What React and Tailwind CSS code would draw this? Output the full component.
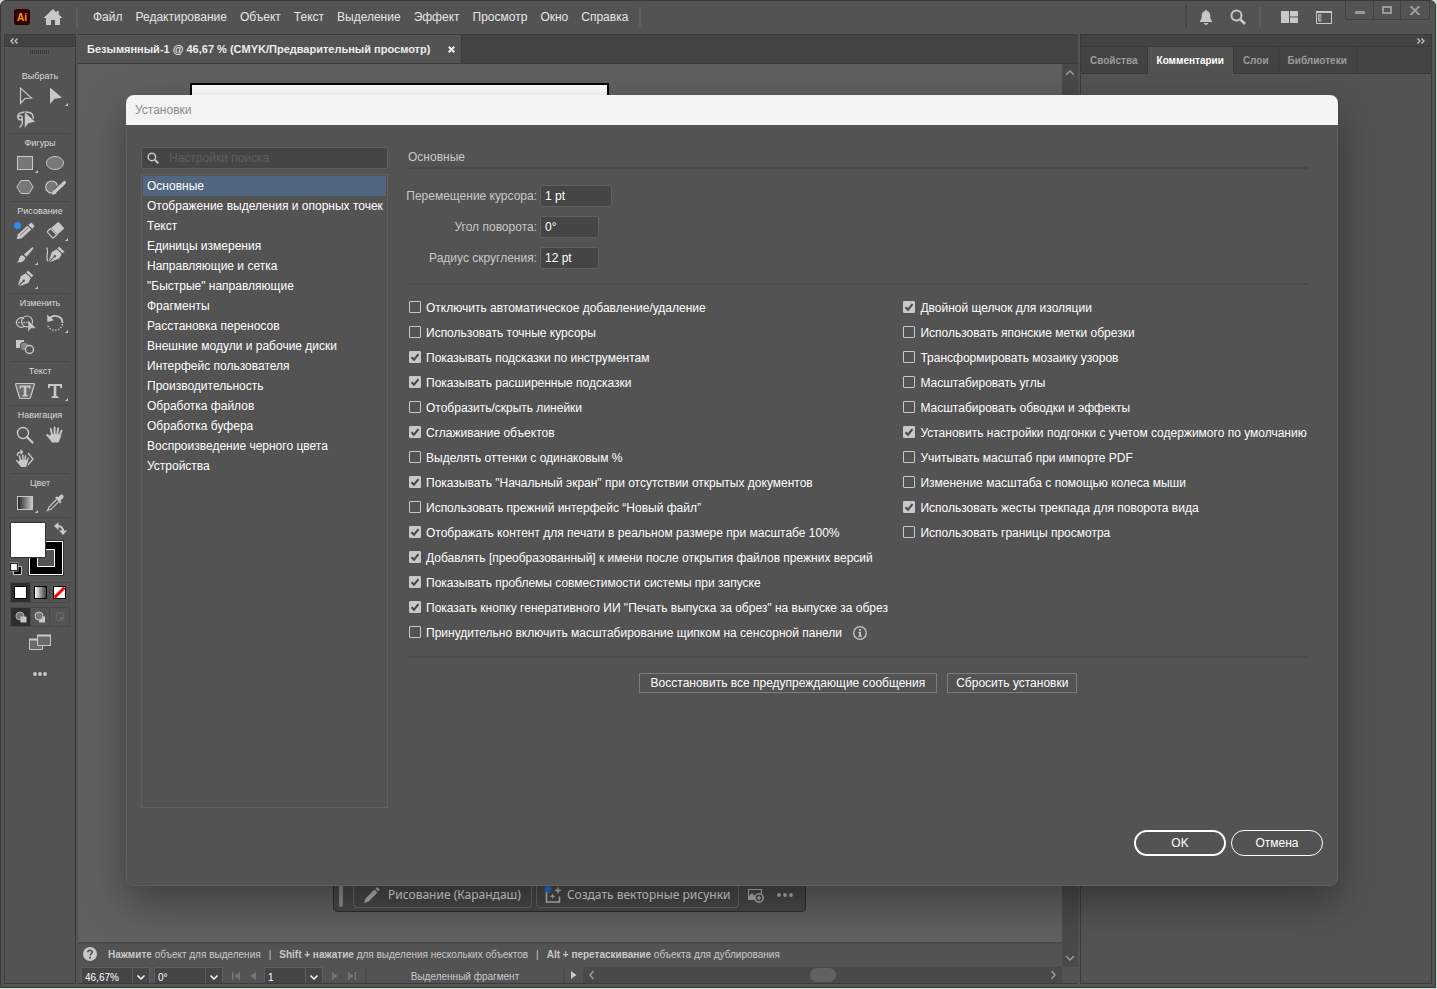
import React, { useState } from 'react';

const menus = ['Файл', 'Редактирование', 'Объект', 'Текст', 'Выделение', 'Эффект', 'Просмотр', 'Окно', 'Справка'];

const categories = [
  'Основные',
  'Отображение выделения и опорных точек',
  'Текст',
  'Единицы измерения',
  'Направляющие и сетка',
  '"Быстрые" направляющие',
  'Фрагменты',
  'Расстановка переносов',
  'Внешние модули и рабочие диски',
  'Интерфейс пользователя',
  'Производительность',
  'Обработка файлов',
  'Обработка буфера',
  'Воспроизведение черного цвета',
  'Устройства',
];

const leftOptions = [
  ['Отключить автоматическое добавление/удаление', false],
  ['Использовать точные курсоры', false],
  ['Показывать подсказки по инструментам', true],
  ['Показывать расширенные подсказки', true],
  ['Отобразить/скрыть линейки', false],
  ['Сглаживание объектов', true],
  ['Выделять оттенки с одинаковым %', false],
  ['Показывать "Начальный экран" при отсутствии открытых документов', true],
  ['Использовать прежний интерфейс “Новый файл”', false],
  ['Отображать контент для печати в реальном размере при масштабе 100%', true],
  ['Добавлять [преобразованный] к имени после открытия файлов прежних версий', true],
  ['Показывать проблемы совместимости системы при запуске', true],
  ['Показать кнопку генеративного ИИ "Печать выпуска за обрез" на выпуске за обрез', true],
  ['Принудительно включить масштабирование щипком на сенсорной панели', false, true],
];

const rightOptions = [
  ['Двойной щелчок для изоляции', true],
  ['Использовать японские метки обрезки', false],
  ['Трансформировать мозаику узоров', false],
  ['Масштабировать углы', false],
  ['Масштабировать обводки и эффекты', false],
  ['Установить настройки подгонки с учетом содержимого по умолчанию', true],
  ['Учитывать масштаб при импорте PDF', false],
  ['Изменение масштаба с помощью колеса мыши', false],
  ['Использовать жесты трекпада для поворота вида', true],
  ['Использовать границы просмотра', false],
];

// Tool glyphs, each drawn in a 30x24 cell
const glyphs = {
  select: <path d="M10.500 4v15.500l4.500-5 6.500-.500z" fill="none" stroke="#c8c8c8" strokeWidth="1.200" />,
  direct: <path d="M10 3.500V20l4.700-5.300 7.300-1z" />,
  lasso: (
    <>
      <path d="M13 11.500H9.500C5 8.500 9 4 15.500 4S24 7 23 11M12 9.500a2 2 0 1 0-3 2c2 1 4-.5 3-3M12 12c1 3-.5 6-2.500 7.500" fill="none" stroke="#c8c8c8" strokeWidth="1.400" />
      <path d="M14.500 3.500v17l4-5 7-1.500z" stroke="#535353" strokeWidth=".6" />
    </>
  ),
  rect: <rect x="7.500" y="5.500" width="15" height="13" fill="#777" stroke="#c8c8c8" />,
  ellipse: <ellipse cx="15" cy="12" rx="8.500" ry="6.500" fill="#777" stroke="#c8c8c8" />,
  hexagon: <path d="M6.800 12L11 5.500h8l4.200 6.500-4.200 6.500h-8z" fill="#777" stroke="#c8c8c8" />,
  shaper: (
    <>
      <circle cx="11.700" cy="12" r="6" fill="#777" stroke="#c8c8c8" strokeWidth="1.200" />
      <path d="M25 7.500L15 16.500" stroke="#535353" strokeWidth="5.500" />
      <path d="M24.500 7.500L15 16.500" stroke="#c8c8c8" strokeWidth="3.200" strokeLinecap="round" />
      <path d="M12 20l1.200-5 3.600 3.400z" />
    </>
  ),
  pencil: (
    <>
      <path d="M17.300 6.800l4 3.800-9.500 8.700-5.100 1 1.300-5.100z" />
      <path d="M18.300 5.900l1.900-1.700q.9-.7 1.800.1l2 1.900q.8.9 0 1.700l-1.700 1.800z" />
      <path d="M10 16.500L18 9" stroke="#535353" strokeWidth=".7" />
      <circle cx="7.500" cy="6.500" r="3.600" fill="#2d8ceb" />
    </>
  ),
  eraser: (
    <>
      <path d="M17.500 3.500q.8-.7 1.600 0l4.500 5q.7.8 0 1.500l-6 5.500-6.500-6.500z" />
      <path d="M10.500 9.500L7.800 12q-.8.900 0 1.700l4.500 4.800q.7.700 1.500 0l3-2.700z" fill="none" stroke="#c8c8c8" strokeWidth="1.200" />
    </>
  ),
  brush: (
    <>
      <path d="M22.500 4q1.500.5.500 2l-6.500 7.800-2.600-2.300z" />
      <path d="M12.900 12.400l2.600 2.400c-1.500 4.500-5.500 5-9 4.500 2.800-1 2.200-3 3.200-5.200q1-2 3.200-1.700z" />
    </>
  ),
  curvature: (
    <>
      <path d="M6.500 4.500c3 3-1.500 10 1.500 14" fill="none" stroke="#c8c8c8" strokeWidth="1.200" />
      <path d="M19 3.500l5.500 5.200-2 1.500-5-4.800z" />
      <path d="M16.800 6.200l5 4.800-2.500 4.500-9.800 3.800 5-5a1.200 1.200 0 1 0-.8-.8L8.800 18.500l3-9.500z" />
    </>
  ),
  pen: (
    <>
      <path d="M18 3.500l5.500 5.200-2 1.600-5-4.800z" />
      <path d="M15.800 6.300l5 4.800-2.500 4.900-9.600 3.600 4.700-4.700a1.200 1.200 0 1 0-.8-.8L7.800 18.800l3-9.600z" />
    </>
  ),
  builder: (
    <>
      <circle cx="17" cy="10.500" r="5.500" fill="none" stroke="#c8c8c8" strokeWidth="1.200" />
      <path d="M14 7.500a4.800 4.800 0 1 0 0 8h4" fill="none" stroke="#c8c8c8" strokeWidth="1.200" />
      <path d="M8 11.500h10" stroke="#c8c8c8" strokeWidth="1.500" strokeDasharray="1.500 1.200" />
      <path d="M18 9v12l3-3.500 5-.5z" stroke="#535353" strokeWidth=".5" />
    </>
  ),
  rotate: (
    <>
      <path d="M8.500 9C12 2.500 22.500 4 22.500 12" fill="none" stroke="#c8c8c8" strokeWidth="1.800" />
      <path d="M7 3.500l.5 7.500 6.500-1.800z" />
      <path d="M22.500 13C21 21 10 21.500 7.500 14" fill="none" stroke="#c8c8c8" strokeWidth="1.400" strokeDasharray="1.300 1.700" />
    </>
  ),
  blend: (
    <>
      <rect x="6" y="5" width="8" height="8" />
      <rect x="10.500" y="7.500" width="8" height="8" rx="2.500" fill="#888" stroke="#535353" />
      <circle cx="19.500" cy="14.500" r="4" fill="#535353" stroke="#c8c8c8" strokeWidth="1.400" />
    </>
  ),
  touchType: (
    <>
      <path d="M6.500 4.500h17q1.200 0 .8 1.300l-3.800 12.700q-.3 1-1.300 1h-8.400q-1 0-1.300-1L5.700 5.800q-.4-1.300.8-1.300z" fill="#6a6a6a" stroke="#c8c8c8" strokeWidth="1.200" />
      <path d="M9.500 6.500h11v3.200h-1.200l-.6-1.500h-2.400v7.600l1.500.6v1.100h-5.600v-1.100l1.500-.6V8.200h-2.400l-.6 1.500H9.500z" />
    </>
  ),
  type: <path d="M8 5h14v4.200h-1.300l-.9-2.200h-3.500v10l2.200.6V19h-7v-1.400l2.200-.6V7h-3.500l-.9 2.200H8z" />,
  zoom: (
    <>
      <circle cx="13" cy="10" r="5.500" fill="none" stroke="#c8c8c8" strokeWidth="1.400" />
      <path d="M17 14l5.500 5.500" stroke="#c8c8c8" strokeWidth="2.200" strokeLinecap="round" />
    </>
  ),
  hand: (
    <>
      <path d="M11 11.500q4-1.500 8.500 0l1.500 2-2.500 6h-6.500L8 14z" />
      <path d="M12 12L10.800 6M14.600 11.500V4.500M17.300 11.500l.8-6M19.500 13l2-5.300M12 17l-4.700-5" stroke="#c8c8c8" strokeWidth="1.900" strokeLinecap="round" />
    </>
  ),
  rotateView: (
    <>
      <path d="M10 13q3.500-1 6.500 0l1.500 1.500-2 5.500h-5l-3.500-4.500z" />
      <path d="M10.500 13.500l-1-4.500M12.800 13V8M14.900 13.500l.6-4.500M16.700 14.500l1.500-3.500M10.500 17.500l-3.800-3.700" stroke="#c8c8c8" strokeWidth="1.500" strokeLinecap="round" />
      <path d="M7.500 9C7 6 9 5 12 5M10.500 2.800l2 2.200-2 2M18 6l5 6-5 6" fill="none" stroke="#c8c8c8" strokeWidth="1.300" />
    </>
  ),
  gradient: (
    <>
      <defs>
        <linearGradient id="toolGradient">
          <stop offset="0" stopColor="#222" />
          <stop offset="1" stopColor="#ccc" />
        </linearGradient>
      </defs>
      <rect x="7.500" y="5.500" width="15" height="13" fill="url(#toolGradient)" stroke="#c8c8c8" />
    </>
  ),
  dropper: (
    <>
      <path d="M16.500 8.500L9 16q-1 2.800-1.500 3.500.9-.3 3.500-1.200l7.500-7.500" fill="none" stroke="#c8c8c8" strokeWidth="1.200" />
      <path d="M15 6.500l1.500-1 1.700.8 2-2.300q1.800-1 3 .3 1 1.400-.2 3l-2.300 2 .6 1.700-1.200 1.400z" />
    </>
  ),
};

const toolSections = [
  { title: 'Выбрать', tools: [['select', 'Выделение'], ['direct', 'Прямое выделение', true], ['lasso', 'Лассо']] },
  { title: 'Фигуры', tools: [['rect', 'Прямоугольник', true], ['ellipse', 'Эллипс'], ['hexagon', 'Многоугольник'], ['shaper', 'Shaper']] },
  { title: 'Рисование', tools: [['pencil', 'Карандаш'], ['eraser', 'Ластик', true], ['brush', 'Кисть', true], ['curvature', 'Кривизна'], ['pen', 'Перо', true]] },
  { title: 'Изменить', tools: [['builder', 'Создание фигур'], ['rotate', 'Поворот', true], ['blend', 'Переход']] },
  { title: 'Текст', tools: [['touchType', 'Изменение текста'], ['type', 'Текст', true]] },
  { title: 'Навигация', tools: [['zoom', 'Масштаб'], ['hand', 'Рука'], ['rotateView', 'Поворот вида']] },
  { title: 'Цвет', tools: [['gradient', 'Градиент', true], ['dropper', 'Пипетка']] },
];

function SearchIcon({ className }) {
  return (
    <svg className={className} viewBox="0 0 16 16" fill="none" stroke="currentColor">
      <circle cx="6.500" cy="6.500" r="5" strokeWidth="2" />
      <path d="M10.500 10.500l4.500 4.500" strokeWidth="2.600" />
    </svg>
  );
}

function Chevron({ className, d }) {
  return (
    <svg className={className} viewBox="0 0 10 10" fill="none" stroke="currentColor" strokeWidth="1.5">
      <path d={d} />
    </svg>
  );
}

function TopBar() {
  return (
    <header className="flex h-8 shrink-0 items-center">
      <svg className="ml-[13px] h-4 w-4 shrink-0" viewBox="0 0 16 16">
        <rect width="16" height="16" rx="3" fill="#330000" />
        <text x="8" y="11.500" textAnchor="middle" fontSize="10" fontWeight="700" fill="#ff9a00">Ai</text>
      </svg>
      <button type="button" aria-label="Начальный экран" className="ml-[13px] text-[#c8c8c8]">
        <svg className="h-4 w-5" viewBox="0 0 20 16" fill="currentColor">
          <path d="M10 0l3.500 3.400V2h2.300v3.600L19.500 9H17v7h-5v-5H8v5H3V9H.500z" />
        </svg>
      </button>
      <span className="ml-[13px] h-5 w-0.5 bg-[#5e5e5e]" />
      <nav className="ml-[15px] flex gap-[13px] text-xs text-[#e6e6e6]">
        {menus.map((m) => (
          <button key={m} type="button">{m}</button>
        ))}
      </nav>
      <span className="ml-[11px] h-5 w-0.5 bg-[#5e5e5e]" />
      <div className="ml-auto flex items-center text-[#c8c8c8]">
        <span className="h-6 w-0.5 bg-[#474747]" />
        <button type="button" aria-label="Уведомления" className="ml-3">
          <svg className="h-[15px] w-[14px]" viewBox="0 0 14 15" fill="currentColor">
            <path d="M7 0q1.200 0 1.300 1.200C11 2 11.300 4.200 11.300 6.500c0 2.500.7 3.500 1.700 4.500v1H1v-1c1-1 1.700-2 1.700-4.500C2.700 4.200 3 2 5.700 1.200Q5.800 0 7 0zM4.800 13h4.400Q8.500 15 7 15t-2.200-2z" />
          </svg>
        </button>
        <button type="button" aria-label="Поиск" className="ml-[17px]"><SearchIcon className="h-4 w-4" /></button>
        <span className="ml-[13px] h-5 w-0.5 bg-[#5e5e5e]" />
        <button type="button" aria-label="Упорядочить документы" className="ml-5">
          <svg className="h-3 w-[17px]" viewBox="0 0 17 12" fill="currentColor">
            <path d="M0 0h8v12H0zM9 0h8v5.500H9zM9 6.500h8V12H9z" />
          </svg>
        </button>
        <button type="button" aria-label="Рабочая среда" className="ml-[18px]">
          <svg className="h-[13px] w-4" viewBox="0 0 16 13" fill="none" stroke="currentColor">
            <path d="M.5 1h15v11.500H.500z" />
            <path d="M0 1h16" strokeWidth="2" />
            <path d="M2.500 3.500h2.500v6.500h-2.500z" strokeWidth=".8" />
            <path d="M3.500 4.500v5" strokeWidth="1.200" strokeDasharray="1 1" />
          </svg>
        </button>
      </div>
      <div className="mr-[5px] ml-[13px] flex self-start rounded-b border border-t-0 border-[#404040] text-[#9a9a9a]">
        <button type="button" aria-label="Свернуть" className="flex h-[18px] w-7 items-center justify-center border-r border-[#404040]">
          <span className="mt-1 h-[3px] w-2.5 bg-[#9a9a9a]" />
        </button>
        <button type="button" aria-label="Развернуть" className="flex h-[18px] w-[27px] items-center justify-center border-r border-[#404040]">
          <span className="h-2 w-2.5 border-2 border-[#9a9a9a]" />
        </button>
        <button type="button" aria-label="Закрыть" className="flex h-[18px] w-7 items-center justify-center">
          <svg className="h-[9px] w-2.5" viewBox="0 0 10 9" stroke="currentColor" strokeWidth="2"><path d="M.5 0l9 9M9.500 0l-9 9" /></svg>
        </button>
      </div>
    </header>
  );
}

function ToolBox() {
  return (
    <aside className="flex w-[72px] shrink-0 flex-col items-center border border-[#3b3b3b]">
      <div className="flex h-3 w-full items-center border-b border-[#3b3b3b] bg-[#434343] pl-[5px] text-[#c8c8c8]">
        <svg className="h-[6px] w-2" viewBox="0 0 8 6" fill="none" stroke="currentColor" strokeWidth="1.300"><path d="M3.500.5L1 3l2.500 2.500M7.500.5L5 3l2.500 2.500" /></svg>
      </div>
      <div className="mt-[3px] h-1 w-5 bg-[repeating-linear-gradient(90deg,#393939_0_1px,transparent_1px_2px)]" />
      <div className="mt-[13px] w-[60px]">
        {toolSections.map((s, i) => (
          <section key={s.title} className={i ? 'border-t border-[#484848] pt-px pb-0.5' : 'pt-px pb-px'}>
            <h2 className="h-4 text-center text-[9px] leading-4 whitespace-nowrap text-[#dadada]">{s.title}</h2>
            <div className="grid grid-cols-2">
              {s.tools.map(([id, name, more]) => (
                <button key={id} type="button" aria-label={name} className="h-6">
                  <svg className="h-6 w-[30px]" viewBox="0 0 30 24" fill="#c8c8c8">
                    {glyphs[id]}
                    {more && <path d="M28 19v3h-3z" />}
                  </svg>
                </button>
              ))}
            </div>
          </section>
        ))}
        <div className="border-t border-[#484848]">
          <svg className="h-[60px] w-[60px]" viewBox="0 0 60 60">
            <path d="M19.500 23.500h33v33h-33z" fill="#000" stroke="#fff" />
            <path d="M18.500 22.500h35v35h-35z" fill="none" stroke="#333" />
            <path d="M27.500 31.500h17v17h-17z" fill="#535353" stroke="#fff" />
            <path d="M.500 4.500h35v35H.500z" fill="#fff" stroke="#333" />
            <path d="M47 8.500q6-1 6 5" fill="none" stroke="#c8c8c8" strokeWidth="2" />
            <path d="M48.500 4v8L44 8zM49 12.500h8L53 17z" fill="#c8c8c8" />
            <path d="M3.500 48.500h8v8h-8z" fill="#000" stroke="#c8c8c8" />
            <path d="M-.5 44.500h9v9h-9z" fill="#c8c8c8" />
            <path d="M.500 45.500h7v7h-7z" fill="#fff" stroke="#222" strokeWidth="1.200" />
          </svg>
        </div>
        <div className="mt-1 flex border border-[#484848]">
          <button type="button" aria-label="Цвет" className="flex h-[19px] w-[19px] items-center justify-center bg-[#2e2e2e]"><span className="h-[13px] w-[13px] border border-black bg-white" /></button>
          <button type="button" aria-label="Градиент" className="flex h-[19px] flex-1 items-center justify-center border-x border-[#484848]"><span className="h-[13px] w-[13px] border border-black bg-linear-to-r from-white to-neutral-700" /></button>
          <button type="button" aria-label="Нет" className="flex h-[19px] w-[19px] items-center justify-center">
            <svg className="h-[13px] w-[13px]" viewBox="0 0 13 13"><path d="M.5.5h12v12H.500z" fill="#fff" stroke="#000" /><path d="M1.500 11.500l10-10" stroke="#f00" strokeWidth="3" /></svg>
          </button>
        </div>
        <div className="mt-1 flex border border-[#484848]">
          <button type="button" aria-label="Рисовать нормально" className="flex h-[18px] w-[19px] items-center justify-center bg-[#2e2e2e]">
            <svg className="h-3 w-3" viewBox="0 0 12 12"><circle cx="5" cy="5" r="4" fill="#777" stroke="#aaa" /><rect x="5.500" y="5.500" width="6" height="6" fill="#c8c8c8" /></svg>
          </button>
          <button type="button" aria-label="Рисовать позади" className="flex h-[18px] flex-1 items-center justify-center border-x border-[#484848]">
            <svg className="h-3 w-3" viewBox="0 0 12 12"><rect x="5" y="5.500" width="6" height="6" fill="#c8c8c8" /><circle cx="5" cy="5" r="4" fill="#777" stroke="#c8c8c8" /></svg>
          </button>
          <button type="button" aria-label="Рисовать внутри" className="flex h-[18px] w-[19px] items-center justify-center">
            <svg className="h-3 w-3" viewBox="0 0 12 12"><circle cx="6" cy="5.500" r="4" fill="none" stroke="#707070" /><path d="M6 6h3.500L6 9.500z" fill="#707070" /></svg>
          </button>
        </div>
        <button type="button" aria-label="Режим экрана" className="mx-auto mt-[7px] block">
          <svg className="h-[17px] w-[23px]" viewBox="0 0 23 17" fill="#6a6a6a" stroke="#c8c8c8">
            <path d="M.5 5.500h13v10H.500z" /><path d="M0 5.500h14" strokeWidth="2" />
            <path d="M8.500 1.500h13v10h-13z" /><path d="M8 1.500h14" strokeWidth="2" />
          </svg>
        </button>
        <button type="button" aria-label="Изменить панель инструментов" className="mx-auto mt-[21px] block">
          <svg className="h-1 w-[14px]" viewBox="0 0 14 4" fill="#c8c8c8"><circle cx="2" cy="2" r="1.900" /><circle cx="7" cy="2" r="1.900" /><circle cx="12" cy="2" r="1.900" /></svg>
        </button>
      </div>
    </aside>
  );
}

function ComboField({ label, value, narrow }) {
  return (
    <div className="flex h-5 border border-[#5e5e5e] bg-[#454545] text-white">
      <input aria-label={label} defaultValue={value} className={narrow ? 'w-10 pl-[3px] text-[10px]' : 'w-[50px] pl-[3px] text-[10px]'} />
      <button type="button" aria-label={label + ': список'} className="flex w-[17px] items-center justify-center border-l border-[#5e5e5e]">
        <Chevron className="h-2.5 w-2.5" d="M1.500 3.500L5 7l3.500-3.500" />
      </button>
    </div>
  );
}

function Workspace() {
  return (
    <main className="flex min-w-0 flex-1 flex-col border-t border-[#3b3b3b]">
      <div className="flex h-[29px] shrink-0 border-b border-[#3b3b3b] bg-[#434343]">
        <div className="flex items-center border-r border-[#3b3b3b] bg-[#535353] pr-[6px] pl-[9px] text-[11px] font-bold text-[#ececec]">
          Безымянный-1 @ 46,67 % (CMYK/Предварительный просмотр)
          <button type="button" aria-label="Закрыть документ" className="ml-[18px]">
            <svg className="h-[7px] w-[7px]" viewBox="0 0 7 7" stroke="currentColor" strokeWidth="2"><path d="M.7.7l5.600 5.600M6.300.7L.7 6.300" /></svg>
          </button>
        </div>
      </div>
      <div className="flex min-h-0 flex-1">
        <div className="flex min-w-0 flex-1 flex-col">
          <div className="relative min-h-0 flex-1 overflow-hidden bg-[#606060]">
            <div className="mt-[19px] ml-28 h-3/5 w-[419px] border-2 border-black bg-white" />
            <div className="absolute bottom-[30px] left-[255px] flex h-[34px] items-center rounded border border-[#2c2c2c] bg-[#484848] pr-3 pl-[5px] font-['Noto_Sans',sans-serif] text-xs text-[#dcdcdc]">
              <span className="h-6 w-1 rounded-full bg-[#8c8c8c]" />
              <button type="button" className="ml-2.5 flex h-[26px] items-center gap-2 rounded-sm border border-[#686868] px-2.5">
                <svg className="h-4 w-4" viewBox="0 0 16 16" fill="#b0b0b0"><path d="M10.500 2.500l3 3-9 9L0 16l1.500-4.500zM11.500 1.500l1-1Q13 0 14 .800l1.300 1.300q.7.900 0 1.400l-1 1z" /></svg>
                Рисование (Карандаш)
              </button>
              <button type="button" className="ml-1 flex h-[26px] items-center gap-[5px] rounded-sm border border-[#686868] px-2">
                <svg className="h-5 w-[17px] overflow-visible" viewBox="0 0 17 20" fill="none" stroke="#b8b8b8" strokeWidth="1.600">
                  <path d="M5 6.500H1.500v10.500h13V11.500" />
                  <path d="M13 1.500l1 3 3 1-3 1-1 3-1-3-3-1 3-1zM7.500 8.500l.8 2 2 .8-2 .8-.8 2-.8-2-2-.8 2-.8z" fill="#b8b8b8" stroke="none" />
                  <circle cx="3" cy="4" r="3.500" fill="#2370c4" stroke="none" />
                </svg>
                Создать векторные рисунки
              </button>
              <button type="button" aria-label="Добавить изображение" className="ml-[9px]">
                <svg className="h-[15px] w-4" viewBox="0 0 16 15" fill="none" stroke="#b0b0b0">
                  <path d="M7.500 11.500h-7V1.500h13V6" strokeWidth="1.200" />
                  <path d="M1 11V8l3-3 3 3 2-1.500L8 11z" fill="#b0b0b0" stroke="none" />
                  <circle cx="11" cy="10" r="4.200" fill="#484848" strokeWidth="1.600" />
                  <path d="M11 7.800v4.400M8.800 10h4.400" strokeWidth="1.400" />
                </svg>
              </button>
              <button type="button" aria-label="Дополнительно" className="ml-[13px]">
                <svg className="h-1 w-4" viewBox="0 0 16 4" fill="#b0b0b0"><circle cx="2" cy="2" r="1.900" /><circle cx="8" cy="2" r="1.900" /><circle cx="14" cy="2" r="1.900" /></svg>
              </button>
            </div>
          </div>
          <div className="h-[25px] shrink-0 border-t-2 border-[#494949] pl-[5px] text-[10px] whitespace-nowrap text-[#c8c8c8]">
            <div className="flex h-5 items-center">
              <svg className="h-[14px] w-[14px]" viewBox="0 0 14 14">
                <circle cx="7" cy="7" r="7" fill="#c8c8c8" />
                <path d="M4.800 5.300c0-3 4.600-2.700 4.400-.1C9.100 6.700 7.100 6.800 7.100 8.600" fill="none" stroke="#484848" strokeWidth="1.500" />
                <circle cx="7.100" cy="10.800" r="1" fill="#484848" />
              </svg>
              <p className="ml-[11px] flex gap-2">
                <span><b>Нажмите</b> объект для выделения</span>
                <span>|</span>
                <span><b>Shift + нажатие</b> для выделения нескольких объектов</span>
                <span>|</span>
                <span><b>Alt + перетаскивание</b> объекта для дублирования</span>
              </p>
            </div>
          </div>
        </div>
        <div className="flex w-4 shrink-0 flex-col items-center justify-between bg-[#494949] py-1 text-[#9a9a9a]">
          <button type="button" aria-label="Прокрутить вверх"><Chevron className="block h-2.5 w-2.5" d="M1 7l4-4 4 4" /></button>
          <button type="button" aria-label="Прокрутить вниз"><Chevron className="block h-2.5 w-2.5" d="M1 3l4 4 4-4" /></button>
        </div>
      </div>
      <div className="flex h-[17px] shrink-0 items-start overflow-hidden border-b border-[#3b3b3b] pl-[3px] text-[10px] text-[#c8c8c8]">
        <div className="flex gap-1">
          <ComboField label="Масштаб" value="46,67%" />
          <ComboField label="Поворот" value="0°" />
        </div>
        <div className="mr-2 ml-[9px] flex h-[18px] items-center gap-2.5 text-[#777]">
          <svg className="h-2 w-2" viewBox="0 0 8 8" fill="currentColor"><path d="M0 0h1.500v8H0zM8 0v8L2.500 4z" /></svg>
          <svg className="h-2 w-[6px]" viewBox="0 0 6 8" fill="currentColor"><path d="M6 0v8L.500 4z" /></svg>
        </div>
        <ComboField label="Монтажная область" value="1" narrow />
        <div className="mx-[9px] flex h-[18px] items-center gap-2.5 text-[#777]">
          <svg className="h-2 w-[6px]" viewBox="0 0 6 8" fill="currentColor"><path d="M0 0v8l5.500-4z" /></svg>
          <svg className="h-2 w-2" viewBox="0 0 8 8" fill="currentColor"><path d="M8 0H6.500v8H8zM0 0v8l5.500-4z" /></svg>
        </div>
        <span className="h-4 w-0.5 bg-[#4a4a4a]" />
        <span className="w-[196px] text-center leading-5">Выделенный фрагмент</span>
        <button type="button" aria-label="Показать" className="flex h-4 w-5 items-center justify-center border-l-2 border-[#4a4a4a]">
          <svg className="h-2 w-[6px]" viewBox="0 0 6 8" fill="currentColor"><path d="M0 0v8l5.500-4z" /></svg>
        </button>
        <div className="flex h-4 min-w-0 flex-1 items-center justify-between bg-[#494949] px-1 text-[#9a9a9a]">
          <Chevron className="h-2.5 w-2.5" d="M6.500 1L3 5l3.500 4" />
          <span className="h-[14px] w-[26px] rounded-full bg-[#616161]" />
          <Chevron className="h-2.5 w-2.5" d="M3.500 1L7 5 3.500 9" />
        </div>
        <span className="w-4 shrink-0" />
      </div>
    </main>
  );
}

function SidePanel() {
  const tabs = ['Свойства', 'Комментарии', 'Слои', 'Библиотеки'];
  return (
    <aside className="flex w-[352px] shrink-0 flex-col border border-[#3b3b3b]">
      <div className="flex h-3 items-center justify-end border-b border-[#3b3b3b] bg-[#434343] pr-[6px] text-[#c8c8c8]">
        <svg className="h-[6px] w-2" viewBox="0 0 8 6" fill="none" stroke="currentColor" strokeWidth="1.300"><path d="M.5.5L3 3 .5 5.500M4.500.5L7 3 4.500 5.500" /></svg>
      </div>
      <div role="tablist" className="flex h-[27px] bg-[#434343] text-[10px] font-bold">
        {tabs.map((t) => (
          <button
            key={t}
            type="button"
            role="tab"
            aria-selected={t === 'Комментарии'}
            className={t === 'Комментарии' ? 'border-r border-[#3b3b3b] bg-[#535353] px-[9px] text-white' : 'border-r border-b border-[#3b3b3b] px-[9px] text-[#9c9c9c]'}
          >
            {t}
          </button>
        ))}
        <span className="flex-1 border-b border-[#3b3b3b]" />
      </div>
    </aside>
  );
}

function Option({ label, checked, onChange, info }) {
  return (
    <div className="flex h-[25px] items-center">
      <label className="flex items-center gap-[5px] whitespace-nowrap">
        <span className="grid pb-px">
          <input type="checkbox" checked={checked} onChange={onChange} className="peer col-start-1 row-start-1 h-3 w-3 appearance-none rounded-[1px] border border-[#c8c8c8] checked:bg-[#c8c8c8]" />
          <svg className="pointer-events-none col-start-1 row-start-1 hidden h-3 w-3 peer-checked:block" viewBox="0 0 12 12" fill="none" stroke="#454545" strokeWidth="2">
            <path d="M2.500 6.200L5 8.700l4.500-5.500" />
          </svg>
        </span>
        {label}
      </label>
      {info && (
        <svg className="ml-[11px] h-[14px] w-[14px]" viewBox="0 0 14 14" fill="#c8c8c8">
          <circle cx="7" cy="7" r="6.300" fill="none" stroke="#c8c8c8" strokeWidth="1.300" />
          <path d="M6 3h2v1.700H6zM5.300 5.800H8v3.700h1v1.200H5.200V9.500h1V7h-.9z" />
        </svg>
      )}
    </div>
  );
}

function OptionList({ items }) {
  const [values, setValues] = useState(items.map((i) => i[1]));
  return (
    <div className="min-w-0">
      {items.map(([label, , info], i) => (
        <Option key={label} label={label} info={info} checked={values[i]} onChange={() => setValues(values.map((v, j) => (j === i ? !v : v)))} />
      ))}
    </div>
  );
}

function PreferencesDialog() {
  const [active, setActive] = useState('Основные');
  return (
    <div role="dialog" aria-label="Установки" className="absolute top-[94px] right-[97px] bottom-[101px] left-[125px] flex flex-col overflow-hidden rounded-lg bg-[#535353] text-xs text-white shadow-[0_16px_40px_rgba(0,0,0,0.35)]">
      <h1 className="flex h-[30px] shrink-0 items-center bg-[#f3f3f3] px-[9px] text-[#8c8c8c]">Установки</h1>
      <div className="flex min-h-0 flex-1 flex-col rounded-b-lg border border-t-0 border-[#5e5e5e] px-[14px]">
        <div className="flex min-h-0 flex-1 gap-5 pt-[22px]">
          <div className="flex w-[247px] shrink-0 flex-col gap-[5px]">
            <label className="flex h-[22px] shrink-0 items-center gap-2.5 rounded-xs border border-[#606060] bg-[#454545] pl-[5px] text-[#c8c8c8]">
              <SearchIcon className="h-3 w-3" />
              <input aria-label="Настройки поиска" placeholder="Настройки поиска" className="min-w-0 flex-1 placeholder:text-[#5e5e5e]" />
            </label>
            <ul className="min-h-0 flex-1 overflow-hidden border border-[#606060] p-px">
              {categories.map((c) => (
                <li key={c}>
                  <button type="button" onClick={() => setActive(c)} className={`block h-5 w-full pl-1 text-left whitespace-nowrap ${c === active ? 'bg-[#51677f]' : ''}`}>{c}</button>
                </li>
              ))}
            </ul>
          </div>
          <div className="mr-[15px] min-w-0 flex-1">
            <h2 className="h-[22px] border-b-2 border-[#4a4a4a] leading-5 text-[#c8c8c8]">{active}</h2>
            <div className="mt-4 grid grid-cols-[129px_auto] items-center justify-start gap-x-[3px] gap-y-[9px]">
              <label htmlFor="nudge" className="flex justify-end whitespace-nowrap text-[#c8c8c8]">Перемещение курсора:</label>
              <input id="nudge" defaultValue="1 pt" className="h-[22px] w-[72px] rounded-xs border border-[#606060] bg-[#454545] px-1" />
              <label htmlFor="angle" className="flex justify-end whitespace-nowrap text-[#c8c8c8]">Угол поворота:</label>
              <input id="angle" defaultValue="0°" className="h-[22px] w-[59px] rounded-xs border border-[#606060] bg-[#454545] px-1" />
              <label htmlFor="radius" className="flex justify-end whitespace-nowrap text-[#c8c8c8]">Радиус скругления:</label>
              <input id="radius" defaultValue="12 pt" className="h-[22px] w-[59px] rounded-xs border border-[#606060] bg-[#454545] px-1" />
            </div>
            <div className="mt-[14px] grid grid-cols-[11fr_9fr] border-y-2 border-[#4a4a4a] pt-2.5 pb-[11px] pl-px">
              <OptionList items={leftOptions} />
              <OptionList items={rightOptions} />
            </div>
            <div className="mt-[15px] flex justify-center gap-2.5">
              <button type="button" className="h-5 border border-[#7c7c7c] px-[11px] whitespace-nowrap">Восстановить все предупреждающие сообщения</button>
              <button type="button" className="h-5 border border-[#7c7c7c] px-2 whitespace-nowrap">Сбросить установки</button>
            </div>
          </div>
        </div>
        <div className="flex justify-end gap-[5px] pt-[22px] pb-[29px]">
          <button type="button" className="h-[26px] w-[92px] rounded-full border-2 border-white">OK</button>
          <button type="button" className="h-[26px] w-[92px] rounded-full border border-white">Отмена</button>
        </div>
      </div>
    </div>
  );
}

export default function App() {
  return (
    <div className="flex h-screen bg-[#c9dfd2] pr-px pb-px font-['Liberation_Sans',Arial,sans-serif]">
      <div className="relative flex min-w-0 flex-1 flex-col rounded-t-md border border-[#383838] bg-[#535353]">
        <TopBar />
        <div className="mt-px flex min-h-0 flex-1 gap-0.5 px-[3px] pb-[3px]">
          <ToolBox />
          <Workspace />
          <SidePanel />
        </div>
        <PreferencesDialog />
      </div>
    </div>
  );
}
